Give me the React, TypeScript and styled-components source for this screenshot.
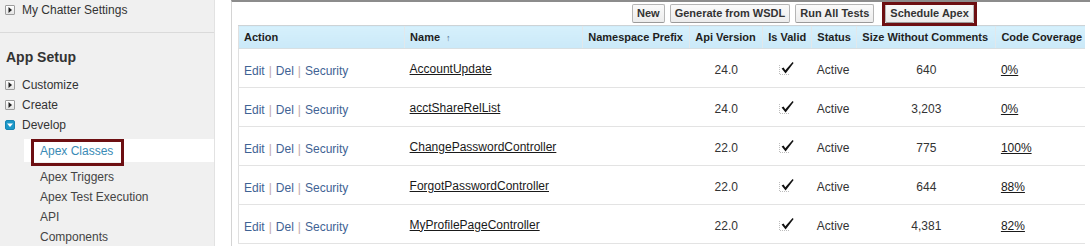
import React from "react"
import styled, { createGlobalStyle } from "styled-components"

const GlobalStyle = createGlobalStyle`
    html, body {
        margin: 0;
        padding: 0;
        background: #fff;
    }
    body {
        font-family: "Liberation Sans", Arial, sans-serif;
        font-size: 12px;
        color: #333;
    }
`

interface ApexClass {
    name: string
    version: string
    status: string
    size: string
    coverage: string
}

const classes: ApexClass[] = [
    { name: "AccountUpdate", version: "24.0", status: "Active", size: "640", coverage: "0%" },
    { name: "acctShareRelList", version: "24.0", status: "Active", size: "3,203", coverage: "0%" },
    { name: "ChangePasswordController", version: "22.0", status: "Active", size: "775", coverage: "100%" },
    { name: "ForgotPasswordController", version: "22.0", status: "Active", size: "644", coverage: "88%" },
    { name: "MyProfilePageController", version: "22.0", status: "Active", size: "4,381", coverage: "82%" }
]

const columns = [166, 178, 107, 73, 49, 45, 139, 89]

const subItems = ["Apex Triggers", "Apex Test Execution", "API", "Components"]

const TreeIcon: React.FC<{ open?: boolean }> = ({ open }) => (
    <S.TreeBox $open={open}>
        {open ? (
            <svg width="8" height="8" viewBox="0 0 8 8">
                <path d="M1 2.5 H7 L4 6 Z" fill="#fff" />
            </svg>
        ) : (
            <svg width="8" height="8" viewBox="0 0 8 8">
                <path d="M2.5 1 V7 L6 4 Z" fill="#222" />
            </svg>
        )}
    </S.TreeBox>
)

const CheckMark = () => (
    <svg width="16" height="14" viewBox="0 0 16 14">
        <path d="M0.5 4 V13.5 H10" fill="none" stroke="#bdbdbd" strokeDasharray="1 1" />
        <path d="M2.6 7.6 L4.6 6.6 L6.3 9.2 L13.6 1 L14.6 1.9 L6.6 12.4 Z" fill="#111" />
    </svg>
)

const Sidebar = () => (
    <S.Sidebar>
        <S.TopSection>
            <S.NavRow>
                <TreeIcon />
                My Chatter Settings
            </S.NavRow>
        </S.TopSection>
        <S.Heading>App Setup</S.Heading>
        <S.NavRow>
            <TreeIcon />
            Customize
        </S.NavRow>
        <S.NavRow>
            <TreeIcon />
            Create
        </S.NavRow>
        <S.NavRow>
            <TreeIcon open />
            Develop
        </S.NavRow>
        <S.SubList>
            <S.SelectedItem>Apex Classes</S.SelectedItem>
            {subItems.map((item) => (
                <S.SubItem key={item}>{item}</S.SubItem>
            ))}
        </S.SubList>
    </S.Sidebar>
)

export default function App() {
    return (
        <>
            <GlobalStyle />
            <S.Page>
                <Sidebar />
                <S.Gutter />
                <S.Content>
                    <S.ButtonBar>
                        <S.Title />
                        <S.Buttons>
                            <S.Btn>New</S.Btn>
                            <S.Btn>Generate from WSDL</S.Btn>
                            <S.Btn>Run All Tests</S.Btn>
                            <S.Btn $highlight>Schedule Apex</S.Btn>
                        </S.Buttons>
                    </S.ButtonBar>
                    <S.Table>
                        <colgroup>
                            {columns.map((w, i) => (
                                <col key={i} style={{ width: w }} />
                            ))}
                        </colgroup>
                        <thead>
                            <tr>
                                <S.Th>Action</S.Th>
                                <S.Th>
                                    Name<S.SortArrow>↑</S.SortArrow>
                                </S.Th>
                                <S.Th>Namespace Prefix</S.Th>
                                <S.Th>Api Version</S.Th>
                                <S.Th>Is Valid</S.Th>
                                <S.Th>Status</S.Th>
                                <S.Th>Size Without Comments</S.Th>
                                <S.Th>Code Coverage</S.Th>
                            </tr>
                        </thead>
                        <tbody>
                            {classes.map((c) => (
                                <S.Row key={c.name}>
                                    <S.Td $pad={5}>
                                        <S.ActionLink>Edit</S.ActionLink>
                                        <S.Pipe>|</S.Pipe>
                                        <S.ActionLink>Del</S.ActionLink>
                                        <S.Pipe>|</S.Pipe>
                                        <S.ActionLink>Security</S.ActionLink>
                                    </S.Td>
                                    <S.Td $pad={1}>
                                        <S.NameLink>{c.name}</S.NameLink>
                                    </S.Td>
                                    <S.Td />
                                    <S.Td $align="center">{c.version}</S.Td>
                                    <S.Td $align="center">
                                        <CheckMark />
                                    </S.Td>
                                    <S.Td>{c.status}</S.Td>
                                    <S.Td $align="center">{c.size}</S.Td>
                                    <S.Td>
                                        <S.NameLink>{c.coverage}</S.NameLink>
                                    </S.Td>
                                </S.Row>
                            ))}
                        </tbody>
                    </S.Table>
                </S.Content>
            </S.Page>
        </>
    )
}

const S = {
    Page: styled.div`
        display: flex;
        width: 1090px;
        height: 246px;
        overflow: hidden;
    `,
    Sidebar: styled.nav`
        flex: none;
        width: 215px;
        box-sizing: border-box;
        background: #f0f0f0;
        border-right: 1px solid #e2e2e2;
    `,
    TopSection: styled.div`
        padding-bottom: 12px;
        border-bottom: 1px solid #dadada;
    `,
    NavRow: styled.div`
        display: flex;
        align-items: center;
        gap: 7px;
        height: 20px;
        padding-left: 5px;
        color: #333;
        white-space: nowrap;
    `,
    TreeBox: styled.span<{ $open?: boolean }>`
        display: inline-flex;
        align-items: center;
        justify-content: center;
        width: 10px;
        height: 10px;
        box-sizing: border-box;
        border-radius: ${(p) => (p.$open ? "2px" : "1px")};
        border: 1px solid ${(p) => (p.$open ? "#1584b3" : "#9d9d9d")};
        background: ${(p) => (p.$open ? "#1c98c8" : "linear-gradient(#ffffff, #e4e4e4)")};
    `,
    Heading: styled.h2`
        margin: 15px 0 9px 6px;
        font-size: 14px;
        line-height: 18px;
        font-weight: bold;
        color: #333;
    `,
    SubList: styled.div`
        margin-top: 4px;
    `,
    SelectedItem: styled.div`
        position: relative;
        margin: 0 0 4px 24px;
        padding-left: 16px;
        height: 23px;
        line-height: 24px;
        background: #fff;
        color: #3a8bb6;

        &::after {
            content: "";
            position: absolute;
            left: 7px;
            top: 0;
            width: 93px;
            height: 27px;
            box-sizing: border-box;
            border: 3px solid #6d0f12;
        }
    `,
    SubItem: styled.div`
        height: 20px;
        line-height: 22px;
        padding-left: 40px;
        color: #444;
        white-space: nowrap;
    `,
    Gutter: styled.div`
        flex: none;
        width: 16px;
        background: #fff;
    `,
    Content: styled.main`
        flex: 1;
        min-width: 0;
        border-top: 2px solid #8c8c8c;
        border-left: 1px solid #d4d4d4;
        padding-left: 6px;
        overflow: hidden;
    `,
    ButtonBar: styled.div`
        display: grid;
        grid-template-columns: 394px auto;
        padding: 2px 0 2px;
    `,
    Title: styled.div``,
    Buttons: styled.div`
        display: flex;
        gap: 5px;
    `,
    Btn: styled.button<{ $highlight?: boolean }>`
        position: relative;
        height: 19px;
        padding: 0 4px;
        margin-left: ${(p) => (p.$highlight ? "6px" : "0")};
        font-family: inherit;
        font-size: 11px;
        font-weight: bold;
        line-height: 17px;
        color: #333;
        background: linear-gradient(#fafafa, #ececec);
        border: 1px solid #b5b5b5;
        border-bottom-color: #9a9a9a;
        border-radius: 2px;
        white-space: nowrap;

        &::after {
            content: "";
            display: ${(p) => (p.$highlight ? "block" : "none")};
            position: absolute;
            inset: -3px -4px -4px -4px;
            border: 3px solid #6d0f12;
        }
    `,
    Table: styled.table`
        table-layout: fixed;
        width: 847px;
        border-collapse: collapse;
        border-left: 1px solid #e0e0e0;
    `,
    Th: styled.th`
        height: 22px;
        padding: 0 0 0 5px;
        text-align: left;
        font-size: 11px;
        font-weight: bold;
        color: #1e1e1e;
        white-space: nowrap;
        overflow: hidden;
        background: linear-gradient(#d6f0fc, #cbe9f8);
        border-top: 1px solid #cdd3d6;
        border-bottom: 1px solid #d8dfe2;
        border-left: 1px solid #e2e8eb;

        &:first-child {
            border-left: none;
        }
    `,
    SortArrow: styled.span`
        margin-left: 6px;
        font-size: 9px;
        font-weight: normal;
        color: #4a6b8a;
    `,
    Row: styled.tr`
        height: 39px;
    `,
    Td: styled.td<{ $align?: string; $pad?: number }>`
        padding: ${(p) => p.$pad ?? 3}px 5px 0;
        text-align: ${(p) => p.$align ?? "left"};
        vertical-align: middle;
        line-height: 14px;
        color: #333;
        white-space: nowrap;
        border-bottom: 1px solid #e3e3e3;
    `,
    ActionLink: styled.span`
        color: #3f6394;
    `,
    Pipe: styled.span`
        margin: 0 4px;
        color: #c2aaaa;
    `,
    NameLink: styled.a`
        color: #1a1a1a;
        text-decoration: underline;
    `
}
